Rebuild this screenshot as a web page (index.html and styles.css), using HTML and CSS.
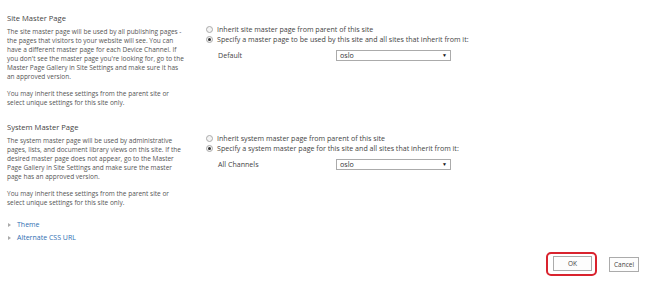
FILE: index.html
```html
<!DOCTYPE html>
<html lang="en">
<head>
    <meta charset="UTF-8">
    <title>Master Page Settings</title>
    <link rel="stylesheet" href="styles.css">
</head>
<body>
    <div class="settings">
        <div class="section first">
            <div class="section-info">
                <h3>Site Master Page</h3>
                <p>The site master page will be used by all publishing pages - the pages that visitors to your website will see. You can have a different master page for each Device Channel. If you don't see the master page you're looking for, go to the Master Page Gallery in Site Settings and make sure it has an approved version.</p>
                <p>You may inherit these settings from the parent site or select unique settings for this site only.</p>
            </div>
            <div class="section-options">
                <label class="radio-row"><span class="radio"></span>Inherit site master page from parent of this site</label>
                <label class="radio-row"><span class="radio checked"></span>Specify a master page to be used by this site and all sites that inherit from it:</label>
                <div class="channel-row">
                    <span class="channel-name">Default</span>
                    <div class="select"><span>oslo</span><span class="arrow">&#9660;</span></div>
                </div>
            </div>
        </div>

        <div class="section">
            <div class="section-info">
                <h3>System Master Page</h3>
                <p>The system master page will be used by administrative pages, lists, and document library views on this site. If the desired master page does not appear, go to the Master Page Gallery in Site Settings and make sure the master page has an approved version.</p>
                <p>You may inherit these settings from the parent site or select unique settings for this site only.</p>
            </div>
            <div class="section-options">
                <label class="radio-row"><span class="radio"></span>Inherit system master page from parent of this site</label>
                <label class="radio-row"><span class="radio checked"></span>Specify a system master page for this site and all sites that inherit from it:</label>
                <div class="channel-row">
                    <span class="channel-name">All Channels</span>
                    <div class="select"><span>oslo</span><span class="arrow">&#9660;</span></div>
                </div>
            </div>
        </div>

        <ul class="expanders">
            <li><span class="caret"></span><a href="#">Theme</a></li>
            <li><span class="caret"></span><a href="#">Alternate CSS URL</a></li>
        </ul>

        <div class="buttons">
            <span class="highlight"><button class="btn">OK</button></span>
            <button class="btn cancel">Cancel</button>
        </div>
    </div>
</body>
</html>
```

FILE: styles.css
```css
body {
    margin: 0;
    background: #fff;
    font-family: "Open Sans", "Noto Sans", sans-serif;
    font-size: 6.5px;
    line-height: 9px;
    color: #555;
}
.settings {
    padding: 13px 11px 0 7px;
}
.section {
    display: flex;
    margin-top: 15px;
}
.section.first {
    margin-top: 0;
}
.section-info {
    width: 178px;
    flex-shrink: 0;
}
.section-info h3 {
    margin: 0 0 4px;
    font-size: 7.6px;
    line-height: 10px;
    font-weight: normal;
    color: #444;
}
.section-info p {
    margin: 0 0 8px;
}
.section-info p:last-child {
    margin-bottom: 0;
}
.section-options {
    padding: 11px 0 0 21px;
    font-size: 7.1px;
}
.radio-row {
    display: flex;
    align-items: center;
    height: 10px;
    color: #444;
}
.radio {
    width: 5px;
    height: 5px;
    border: 1px solid #aaa;
    border-radius: 50%;
    background: #f4f4f4;
    margin-right: 4px;
    position: relative;
}
.radio.checked::after {
    content: "";
    position: absolute;
    left: 1px;
    top: 1px;
    width: 3px;
    height: 3px;
    border-radius: 50%;
    background: #333;
}
.channel-row {
    display: flex;
    align-items: center;
    margin-top: 6px;
    padding-left: 12px;
}
.channel-name {
    width: 118px;
    color: #444;
}
.select {
    width: 107px;
    height: 9px;
    border: 1px solid #ababab;
    display: flex;
    align-items: center;
    justify-content: space-between;
    padding: 0 3px;
    color: #333;
    line-height: 9px;
}
.select .arrow {
    font-size: 5px;
    color: #111;
}
.expanders {
    list-style: none;
    margin: 11px 0 0;
    padding: 0;
}
.expanders li {
    display: flex;
    align-items: center;
    height: 13px;
}
.caret {
    width: 0;
    height: 0;
    border-top: 2.5px solid transparent;
    border-bottom: 2.5px solid transparent;
    border-left: 3px solid #aaa;
    margin: 0 6px 0 1px;
}
.expanders a {
    color: #2f6fb3;
    text-decoration: none;
    font-size: 7px;
}
.buttons {
    display: flex;
    justify-content: flex-end;
    align-items: center;
    margin-top: 8px;
}
.highlight {
    display: inline-flex;
    border: 2px solid #d9232e;
    border-radius: 5px;
    padding: 2px 3px 3px 5px;
    margin-right: 12px;
}
.btn {
    font-family: inherit;
    font-size: 6.5px;
    color: #444;
    background: #fdfdfd;
    border: 1px solid #ababab;
    width: 39px;
    height: 15px;
    padding: 0;
    margin: 0;
}
.btn.cancel {
    width: 30px;
}
```
